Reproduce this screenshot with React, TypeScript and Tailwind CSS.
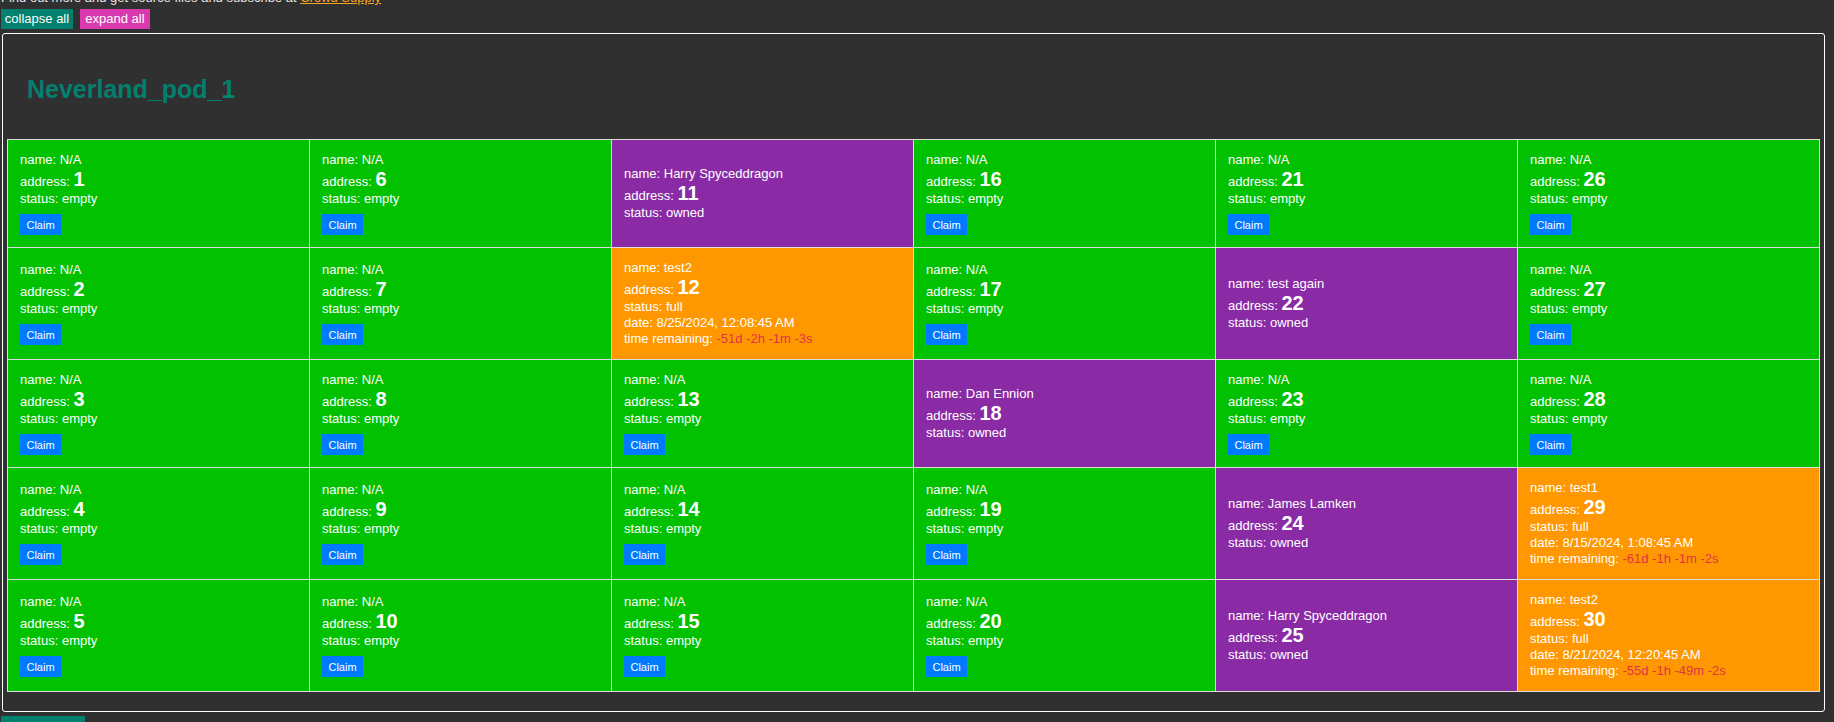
import React from "react";

type Cell = {
  addr: number;
  kind: "empty" | "owned" | "full";
  name?: string;
  date?: string;
  remaining?: string;
};

const special: Record<number, Cell> = {
  11: { addr: 11, kind: "owned", name: "Harry Spyceddragon" },
  12: { addr: 12, kind: "full", name: "test2", date: "8/25/2024, 12:08:45 AM", remaining: "-51d -2h -1m -3s" },
  18: { addr: 18, kind: "owned", name: "Dan Ennion" },
  22: { addr: 22, kind: "owned", name: "test again" },
  24: { addr: 24, kind: "owned", name: "James Lamken" },
  25: { addr: 25, kind: "owned", name: "Harry Spyceddragon" },
  29: { addr: 29, kind: "full", name: "test1", date: "8/15/2024, 1:08:45 AM", remaining: "-61d -1h -1m -2s" },
  30: { addr: 30, kind: "full", name: "test2", date: "8/21/2024, 12:20:45 AM", remaining: "-55d -1h -49m -2s" },
};

const cells: Cell[] = Array.from({ length: 30 }, (_, i) => special[i + 1] ?? { addr: i + 1, kind: "empty" });

const bg = {
  empty: "bg-[#01c101]",
  owned: "bg-[#8a2aa5]",
  full: "bg-[#ff9800]",
};

const PodCell = ({ cell }: { cell: Cell }) => {
  return (
    <div className={`${bg[cell.kind]} flex flex-col justify-center px-3 py-3 text-[13px] leading-[16px] text-white`}>
      <div>name: {cell.name ?? "N/A"}</div>
      <div>
        address: <span className="text-[20px] font-bold leading-[normal]">{cell.addr}</span>
      </div>
      <div>status: {cell.kind}</div>
      {cell.kind === "full" && (
        <>
          <div>date: {cell.date}</div>
          <div>
            time remaining: <span className="text-[#dc3545]">{cell.remaining}</span>
          </div>
        </>
      )}
      {cell.kind === "empty" && (
        <button className="mt-[7px] h-[21px] w-[41px] bg-[#007bff] text-[11px] text-white">Claim</button>
      )}
    </div>
  );
};

export default function App() {
  return (
    <div className="min-h-[722px] overflow-hidden bg-[#303030] font-['Liberation_Sans',Arial,sans-serif]">
      <p className="-mt-[10px] pl-[1px] text-[13px] leading-[15px] text-[#e6e6e6]">
        Find out more and get source files and subscribe at{" "}
        <a className="text-[#f5a623] underline">Crowd Supply</a>
      </p>
      <div className="mt-[4px] flex gap-[7px] pl-[1px]">
        <button className="h-[20px] w-[72px] bg-[#00806e] text-[13px] text-white">collapse all</button>
        <button className="h-[20px] w-[70px] bg-[#d93aaf] text-[13px] text-white">expand all</button>
      </div>
      <div className="ml-[2px] mt-[4px] w-[1823px] rounded-[3px] border border-white pb-[19px] pl-[4px] pr-[4px]">
        <div className="px-[20px] pb-[34px] pt-[39px]">
          <h2 className="text-[25px] font-bold leading-[32px] text-[#00806e]">Neverland_pod_1</h2>
        </div>
        <div className="grid grid-flow-col grid-cols-6 grid-rows-[repeat(5,auto)] gap-px bg-[#dddddd] p-px">
          {cells.map((c) => (
            <PodCell key={c.addr} cell={c} />
          ))}
        </div>
      </div>
      <div className="ml-[1px] mt-[4px] h-[20px] w-[84px] bg-[#00806e]" />
    </div>
  );
}
